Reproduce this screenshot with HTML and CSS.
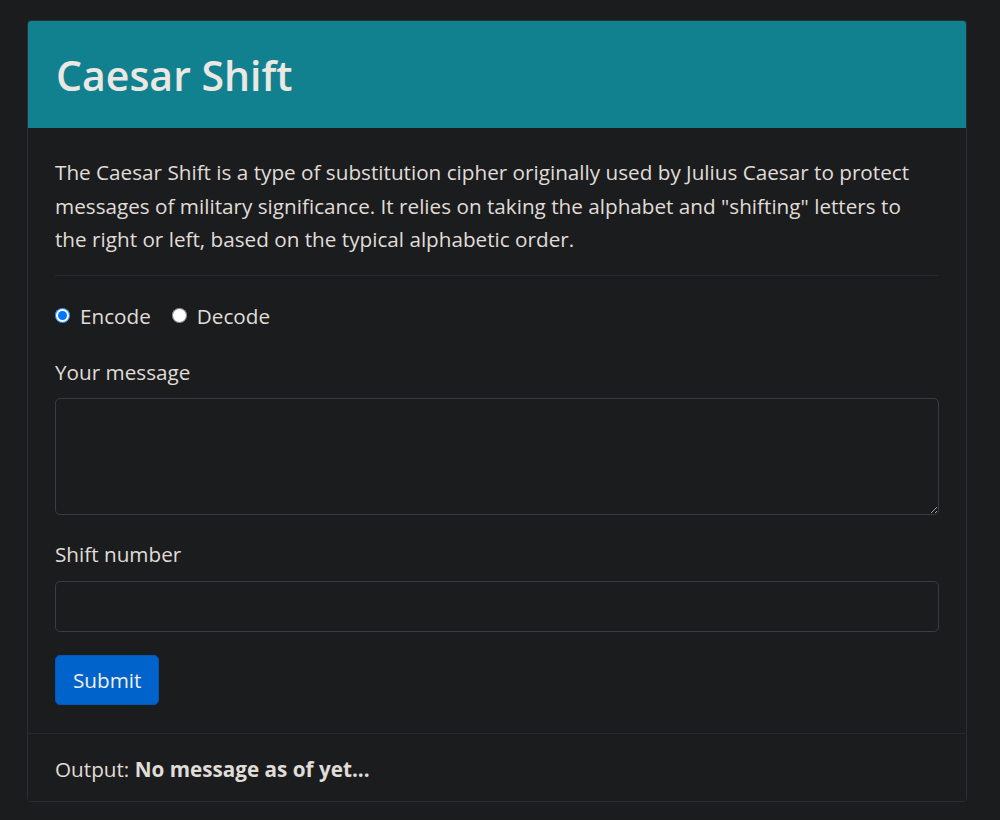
FILE: index.html
```html
<!DOCTYPE html>
<html>
<head>
<meta charset="utf-8">
<link rel="stylesheet" href="styles.css">
</head>
<body>
<div class="card">
  <div class="card-header"><h1>Caesar Shift</h1></div>
  <div class="card-body">
    <p class="intro">The Caesar Shift is a type of substitution cipher originally used by Julius Caesar to protect messages of military significance. It relies on taking the alphabet and "shifting" letters to the right or left, based on the typical alphabetic order.</p>
    <hr class="divider">
    <div class="radios">
      <label class="radio"><input type="radio" name="mode" checked><span>Encode</span></label>
      <label class="radio"><input type="radio" name="mode"><span>Decode</span></label>
    </div>
    <label class="field-label">Your message</label>
    <textarea class="control textarea"></textarea>
    <label class="field-label field-label-shift">Shift number</label>
    <input class="control input" type="text">
    <button class="btn">Submit</button>
  </div>
  <div class="card-footer">Output: <strong>No message as of yet...</strong></div>
</div>
</body>
</html>
```
FILE: styles.css
```css
html, body {
  margin: 0;
  background: #1b1c1e;
}
body {
  padding: 20px 33px 20px 27px;
  font-family: "Open Sans", "Noto Sans", sans-serif;
  color: #e0ddd8;
  font-size: 20.7px;
}
.card {
  border: 1px solid #2c2f32;
  border-radius: 4px;
  background: #1b1c1e;
  overflow: hidden;
}
.card-header {
  background: #12818f;
  height: 107px;
  display: flex;
  align-items: center;
  padding: 0 28px;
}
.card-header h1 {
  margin: 0;
  font-size: 41px;
  font-weight: 600;
  color: #ebe8e4;
}
.card-body {
  padding: 28px 27px 28px 27px;
  display: flex;
  flex-direction: column;
  align-items: flex-start;
}
.intro {
  margin: 0;
  max-width: 868px;
  line-height: 33.5px;
}
.divider {
  align-self: stretch;
  border: 0;
  border-top: 1px solid #26292b;
  margin: 18px 0 23px 0;
}
.radios {
  display: flex;
  gap: 21px;
  height: 34px;
  align-items: center;
}
.radio {
  display: flex;
  align-items: center;
  gap: 10px;
}
.radio input {
  margin: 0;
  width: 15px;
  height: 15px;
}
.field-label {
  margin-top: 24px;
  margin-bottom: 11px;
  line-height: 30px;
}
.field-label-shift {
  margin-bottom: 12px;
}
.control {
  align-self: stretch;
  box-sizing: border-box;
  background: #1b1c1e;
  border: 1px solid #3a3d40;
  border-radius: 5px;
  color: #e0ddd8;
  font: inherit;
}
.textarea {
  height: 117px;
  resize: vertical;
}
.input {
  height: 51px;
}
.btn {
  margin-top: 23px;
  background: #0063cc;
  border: 1px solid #0058b8;
  border-radius: 5px;
  color: #f0eeea;
  font: inherit;
  height: 50px;
  padding: 0 17px;
}
.card-footer {
  border-top: 1px solid #26292b;
  padding: 20px 27px 17px 27px;
  line-height: 30px;
  background: #1b1c1e;
}
.card-footer strong {
  font-weight: 700;
}
```
